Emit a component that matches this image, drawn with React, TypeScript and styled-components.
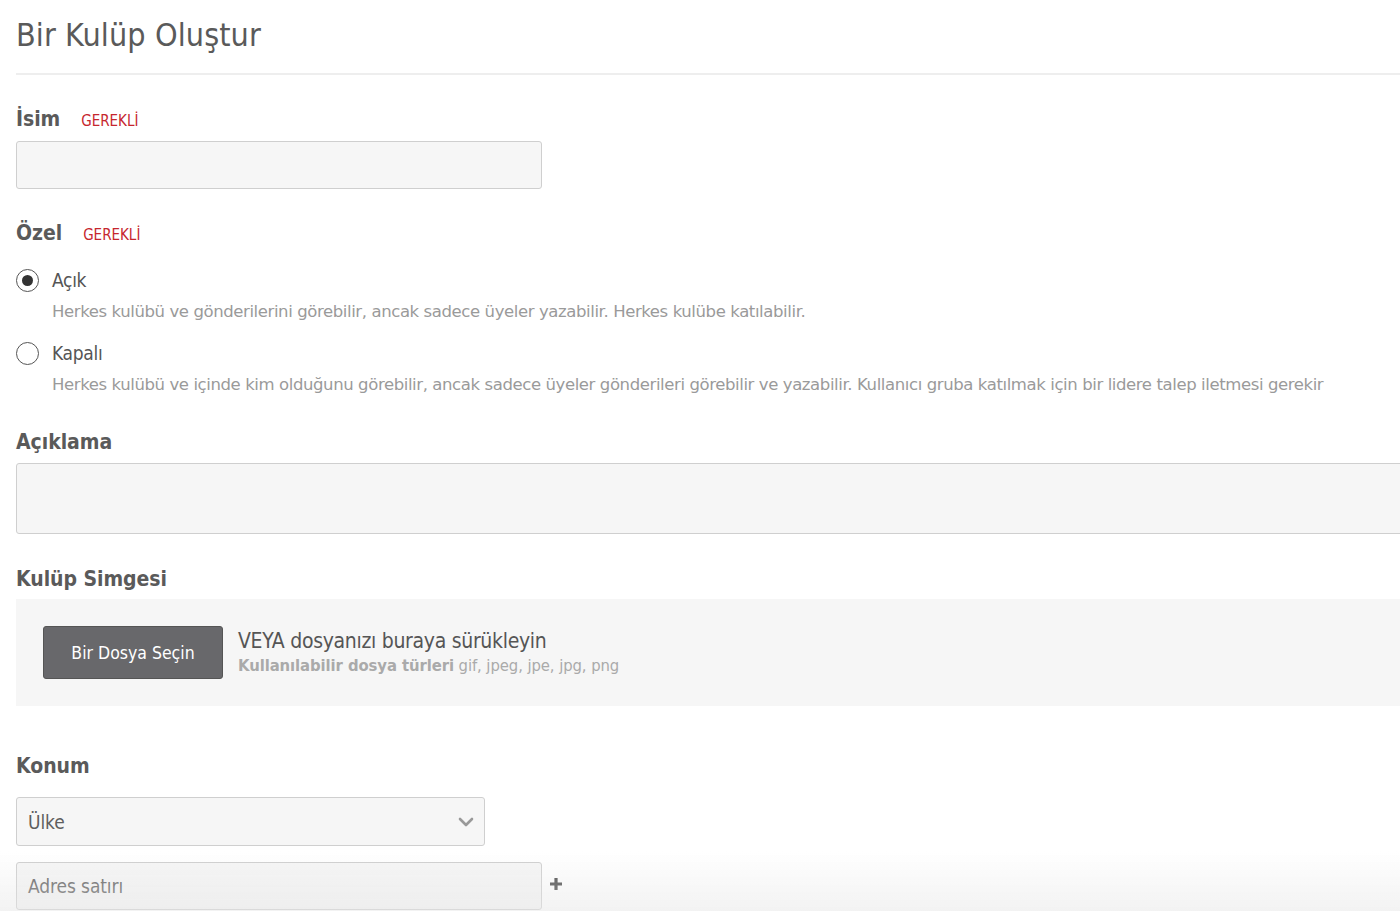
import React from "react";
import styled, { createGlobalStyle } from "styled-components";

const Global = createGlobalStyle`
  html, body { margin: 0; padding: 0; background: #fff; overflow: hidden; }
  body { font-family: "DejaVu Sans Condensed", "DejaVu Sans", Tahoma, sans-serif; color: #555; }
  * { box-sizing: border-box; }
`;

const Page = styled.div`
  width: 1440px;
  padding: 16px 0 0 16px;
`;

const Title = styled.h1`
  margin: 0;
  font-size: 32px;
  line-height: 38px;
  font-weight: normal;
  color: #5a5a5a;
  letter-spacing: 0.1px;
`;

const Rule = styled.hr`
  margin: 19px 0 0 0;
  border: 0;
  border-top: 2px solid #eee;
`;

const Label = styled.div<{ $top: number }>`
  margin-top: ${(p) => p.$top}px;
  display: flex;
  align-items: baseline;
  gap: 21px;
  font-size: 21px;
  line-height: 26px;
  font-weight: bold;
  color: #5a5a5a;
  letter-spacing: -0.05px;
`;

const Required = styled.span`
  font-size: 15px;
  font-weight: normal;
  color: #c6262e;
  letter-spacing: 0;
`;

const Field = styled.div<{ $w: number; $h: number; $top: number }>`
  margin-top: ${(p) => p.$top}px;
  width: ${(p) => p.$w}px;
  height: ${(p) => p.$h}px;
  background: #f6f6f6;
  border: 1.5px solid #cfcfcf;
  border-radius: 3px;
  display: flex;
  align-items: center;
  padding: 0 11px;
  font-size: 19px;
  color: #5f5f5f;
  letter-spacing: -0.1px;
`;

const RadioRow = styled.div<{ $top: number }>`
  margin-top: ${(p) => p.$top}px;
  display: flex;
  align-items: center;
  gap: 13px;
  height: 24px;
  font-size: 19px;
  color: #555;
  letter-spacing: -0.3px;
`;

const RadioCircle = styled.span<{ $checked?: boolean }>`
  width: 23px;
  height: 23px;
  border-radius: 50%;
  border: 1.5px solid #555;
  background: #fff;
  display: flex;
  align-items: center;
  justify-content: center;
  &::after {
    content: "";
    display: ${(p) => (p.$checked ? "block" : "none")};
    width: 11px;
    height: 11px;
    border-radius: 50%;
    background: #333;
  }
`;

const Help = styled.div`
  margin: 10px 0 0 36px;
  font-family: "DejaVu Sans", Tahoma, sans-serif;
  font-size: 16.5px;
  line-height: 20px;
  color: #9a9a9a;
  letter-spacing: -0.4px;
`;

const DropZone = styled.div`
  margin-top: 7px;
  height: 107px;
  background: #f6f6f6;
  display: flex;
  align-items: center;
  padding: 0 27px;
  gap: 15px;
`;

const FileButton = styled.button`
  width: 180px;
  height: 53px;
  margin-top: -1px;
  background: #68686b;
  border: 1px solid #555;
  border-radius: 3px;
  color: #fff;
  font-family: inherit;
  font-size: 17.5px;
  letter-spacing: 0;
  padding-top: 3px;
`;

const DropText = styled.div`
  display: flex;
  flex-direction: column;
  margin-top: -2px;
`;

const DropMain = styled.div`
  font-size: 21px;
  line-height: 28px;
  color: #555;
  letter-spacing: -0.3px;
`;

const DropSub = styled.div`
  font-size: 16.5px;
  line-height: 22px;
  color: #aaa;
  letter-spacing: -0.08px;
  b { font-weight: bold; }
`;

const AddressRow = styled.div`
  margin-top: 16px;
  display: flex;
  align-items: center;
  gap: 7px;
`;

const Chevron = styled.svg`
  margin-left: auto;
  margin-right: -1px;
`;

const Plus = styled.svg`
  margin-top: -4px;
`;

const BottomFade = styled.div`
  position: fixed;
  left: 0;
  right: 0;
  bottom: 0;
  height: 60px;
  pointer-events: none;
  background: linear-gradient(to bottom, rgba(230,230,230,0), rgba(230,230,230,0.5));
`;

export default function App() {
  return (
    <>
      <Global />
      <Page>
        <Title>Bir Kulüp Oluştur</Title>
        <Rule />
        <Label $top={31}>
          İsim <Required>GEREKLİ</Required>
        </Label>
        <Field $w={526} $h={48} $top={7} />
        <Label $top={31}>
          Özel <Required>GEREKLİ</Required>
        </Label>
        <RadioRow $top={20}>
          <RadioCircle $checked /> Açık
        </RadioRow>
        <Help>Herkes kulübü ve gönderilerini görebilir, ancak sadece üyeler yazabilir. Herkes kulübe katılabilir.</Help>
        <RadioRow $top={19}>
          <RadioCircle /> Kapalı
        </RadioRow>
        <Help>
          Herkes kulübü ve içinde kim olduğunu görebilir, ancak sadece üyeler gönderileri görebilir ve yazabilir. Kullanıcı gruba katılmak için bir lidere talep iletmesi gerekir
        </Help>
        <Label $top={34}>Açıklama</Label>
        <Field $w={1440} $h={71} $top={8} />
        <Label $top={32}>Kulüp Simgesi</Label>
        <DropZone>
          <FileButton>Bir Dosya Seçin</FileButton>
          <DropText>
            <DropMain>VEYA dosyanızı buraya sürükleyin</DropMain>
            <DropSub>
              <b>Kullanılabilir dosya türleri</b> gif, jpeg, jpe, jpg, png
            </DropSub>
          </DropText>
        </DropZone>
        <Label $top={47}>Konum</Label>
        <Field $w={469} $h={49} $top={18}>
          Ülke
          <Chevron width="16" height="10" viewBox="0 0 16 10">
            <path d="M2 2 L8 8 L14 2" fill="none" stroke="#999" strokeWidth="2.6" strokeLinecap="round" strokeLinejoin="round" />
          </Chevron>
        </Field>
        <AddressRow>
          <Field $w={526} $h={48} $top={0}>Adres satırı</Field>
          <Plus width="14" height="14" viewBox="0 0 14 14">
            <path d="M7 1 V13 M1 7 H13" stroke="#444" strokeWidth="3.2" />
          </Plus>
        </AddressRow>
      </Page>
      <BottomFade />
    </>
  );
}
